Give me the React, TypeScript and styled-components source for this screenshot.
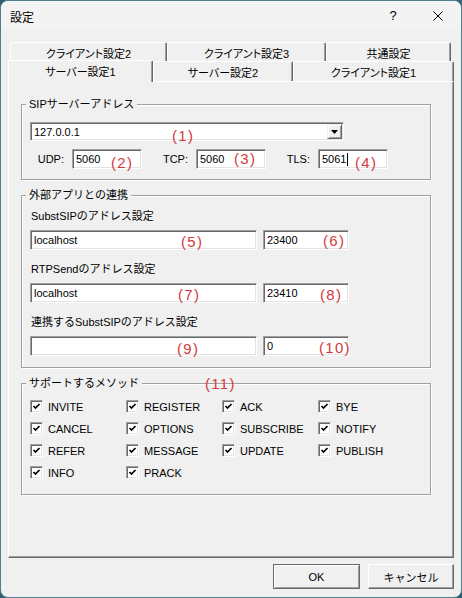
import React from "react";
import styled, { createGlobalStyle, css } from "styled-components";

const GlobalStyle = createGlobalStyle`
  html, body { margin: 0; padding: 0; }
  body {
    background: #2f6170;
    font-family: "Liberation Sans", "Noto Sans CJK JP", sans-serif;
    font-size: 11px;
    color: #000;
  }
  * { box-sizing: border-box; }
`;

const sunken = css`
  border-style: solid;
  border-width: 1px;
  border-color: #a0a0a0 #ffffff #ffffff #a0a0a0;
  box-shadow: inset 1px 1px 0 #696969, inset -1px -1px 0 #e3e3e3;
  background: #ffffff;
`;

const Window = styled.div`
  width: 462px;
  height: 598px;
  border: 1px solid #4f7f8b;
  border-radius: 8px;
  background: #f0f0f0;
  overflow: hidden;
  display: flex;
  flex-direction: column;
`;

const TitleBar = styled.div`
  height: 29px;
  flex: none;
  display: flex;
  align-items: center;
  padding-left: 9px;
  background: #f3f3f3;
`;

const Title = styled.div`
  flex: 1;
  font-family: "Noto Sans CJK JP", sans-serif;
  font-size: 12px;
  padding-top: 1px;
`;

const CaptionButton = styled.div<{ $w: number }>`
  width: ${(p) => p.$w}px;
  height: 29px;
  display: flex;
  align-items: center;
  justify-content: center;
  font-size: 13px;
`;

const Body = styled.div`
  flex: 1;
  display: flex;
  flex-direction: column;
  padding: 12px 7px 8px;
  min-height: 0;
`;

const TabRow = styled.div<{ $back?: boolean }>`
  display: flex;
  align-items: flex-end;
  height: ${(p) => (p.$back ? 20 : 19)}px;
  padding-left: ${(p) => (p.$back ? 2 : 0)}px;
  flex: none;
`;

const Tab = styled.div<{ $w: number; $active?: boolean }>`
  flex: none;
  width: ${(p) => p.$w}px;
  height: ${(p) => (p.$active ? 22 : 20)}px;
  margin-bottom: ${(p) => (p.$active ? -1 : 0)}px;
  ${(p) => (p.$active ? "position: relative; z-index: 1;" : "")}
  display: flex;
  align-items: center;
  justify-content: center;
  background: #f0f0f0;
  border-top: 1px solid #ffffff;
  border-left: 1px solid #ffffff;
  border-right: 1px solid #696969;
  border-radius: 2px 2px 0 0;
  box-shadow: inset -1px 0 0 #a0a0a0;
  font-feature-settings: "palt";
  font-size: 11px;
  padding-bottom: ${(p) => (p.$active ? 2 : 0)}px;
  white-space: nowrap;
`;

const Panel = styled.div`
  flex: 1;
  border-top: 1px solid #ffffff;
  border-left: 1px solid #ffffff;
  border-right: 1px solid #696969;
  border-bottom: 1px solid #696969;
  box-shadow: inset -1px -1px 0 #a0a0a0;
  padding: 15px 0 0 12px;
  display: flex;
  flex-direction: column;
  gap: 8px;
`;

const Group = styled.fieldset<{ $pt: number; $pb: number }>`
  margin: 0;
  width: 410px;
  min-width: 0;
  position: relative;
  border: 1px solid #a0a0a0;
  box-shadow: inset 1px 1px 0 #ffffff, 1px 1px 0 #ffffff;
  padding: ${(p) => p.$pt}px 8px ${(p) => p.$pb}px 8px;
`;

const Legend = styled.legend`
  padding: 0 3px;
  margin-left: -4px;
  line-height: 14px;
  font-size: 11px;
  background: #f0f0f0;
`;

const GroupBody = styled.div<{ $gap: number }>`
  display: flex;
  flex-direction: column;
  gap: ${(p) => p.$gap}px;
`;

const Combo = styled.div`
  ${sunken};
  position: relative;
  width: 314px;
  height: 19px;
  padding: 1px;
  display: flex;
  align-items: center;
`;

const ComboText = styled.div`
  flex: 1;
  padding-left: 2px;
`;

const DropButton = styled.div`
  width: 15px;
  height: 15px;
  display: flex;
  align-items: center;
  justify-content: center;
  background: #f0f0f0;
  border-style: solid;
  border-width: 1px;
  border-color: #f0f0f0 #696969 #696969 #f0f0f0;
  box-shadow: inset 1px 1px 0 #ffffff, inset -1px -1px 0 #a0a0a0;
`;

const PortRow = styled.div`
  display: grid;
  grid-template-columns: 34px 70px 38px 70px 36px 70px;
  column-gap: 8px;
  align-items: center;
`;

const PortLabel = styled.div`
  text-align: right;
  white-space: nowrap;
`;

const TextBox = styled.div<{ $w: number }>`
  ${sunken};
  position: relative;
  width: ${(p) => p.$w}px;
  height: 20px;
  padding: 0 2px 0 3px;
  display: flex;
  align-items: center;
  white-space: nowrap;
`;

const Caret = styled.span`
  display: inline-block;
  width: 1px;
  height: 13px;
  background: #000;
  margin-left: 1px;
`;

const Note = styled.span<{ $x: number; $cy: number }>`
  position: absolute;
  left: ${(p) => p.$x}px;
  top: ${(p) => p.$cy - 9}px;
  color: #d33b3b;
  font-family: "Liberation Sans", sans-serif;
  font-size: 15px;
  line-height: 15px;
  letter-spacing: 1.3px;
  white-space: nowrap;
  pointer-events: none;
`;

const Block = styled.div`
  display: flex;
  flex-direction: column;
  gap: 7px;
`;

const FieldLabel = styled.div`
  line-height: 14px;
  padding-left: 1px;
`;

const AddrRow = styled.div`
  display: flex;
  gap: 6px;
`;

const MethodGrid = styled.div`
  display: grid;
  grid-template-columns: repeat(4, 96px);
  grid-auto-rows: 13px;
  row-gap: 9px;
`;

const Method = styled.label`
  display: flex;
  align-items: center;
  gap: 5px;
  white-space: nowrap;
`;

const CheckBox = styled.span`
  ${sunken};
  width: 13px;
  height: 13px;
  flex: none;
  display: flex;
  align-items: center;
  justify-content: center;
`;

const ButtonRow = styled.div`
  display: flex;
  justify-content: flex-end;
  gap: 8px;
  padding-top: 6px;
  flex: none;
`;

const Button = styled.div<{ $w: number; $default?: boolean }>`
  width: ${(p) => p.$w}px;
  height: 25px;
  display: flex;
  align-items: center;
  justify-content: center;
  background: #f0f0f0;
  border: 1px solid;
  border-color: ${(p) =>
    p.$default ? "#696969" : "#ffffff #696969 #696969 #ffffff"};
  box-shadow: ${(p) =>
    p.$default
      ? "inset 1px 1px 0 #ffffff, inset -1px -1px 0 #a0a0a0"
      : "inset -1px -1px 0 #a0a0a0"};
  font-size: 11px;
`;

const Check = () => (
  <svg width="9" height="9" viewBox="0 0 9 9">
    <polyline
      points="1.5,4 3.5,6 7.5,2"
      fill="none"
      stroke="#000"
      strokeWidth="1.7"
    />
  </svg>
);

const methods = [
  "INVITE", "REGISTER", "ACK", "BYE",
  "CANCEL", "OPTIONS", "SUBSCRIBE", "NOTIFY",
  "REFER", "MESSAGE", "UPDATE", "PUBLISH",
  "INFO", "PRACK",
];

export default function App() {
  return (
    <>
      <GlobalStyle />
      <Window>
        <TitleBar>
          <Title>設定</Title>
          <CaptionButton $w={44}>?</CaptionButton>
          <CaptionButton $w={46}>
            <svg width="10" height="10" viewBox="0 0 10 10">
              <path d="M0.5 0.5L9.5 9.5M9.5 0.5L0.5 9.5" stroke="#000" strokeWidth="1" />
            </svg>
          </CaptionButton>
        </TitleBar>
        <Body>
          <TabRow $back>
            <Tab $w={157}>クライアント設定2</Tab>
            <Tab $w={159}>クライアント設定3</Tab>
            <Tab $w={125}>共通設定</Tab>
          </TabRow>
          <TabRow>
            <Tab $w={145} $active>サーバー設定1</Tab>
            <Tab $w={140}>サーバー設定2</Tab>
            <Tab $w={161}>クライアント設定1</Tab>
          </TabRow>
          <Panel>
            <Group $pt={11} $pb={10}>
              <Legend>SIPサーバーアドレス</Legend>
              <GroupBody $gap={8}>
                <Combo>
                  <ComboText>127.0.0.1</ComboText>
                  <DropButton>
                    <svg width="7" height="4" viewBox="0 0 7 4">
                      <path d="M0 0H7L3.5 4Z" fill="#000" />
                    </svg>
                  </DropButton>
                  <Note $x={141} $cy={14}>(1)</Note>
                </Combo>
                <PortRow>
                  <PortLabel>UDP:</PortLabel>
                  <TextBox $w={70}>
                    5060<Note $x={38} $cy={14}>(2)</Note>
                  </TextBox>
                  <PortLabel>TCP:</PortLabel>
                  <TextBox $w={70}>
                    5060<Note $x={37} $cy={10}>(3)</Note>
                  </TextBox>
                  <PortLabel>TLS:</PortLabel>
                  <TextBox $w={70}>
                    5061<Caret />
                    <Note $x={36} $cy={14}>(4)</Note>
                  </TextBox>
                </PortRow>
              </GroupBody>
            </Group>

            <Group $pt={7} $pb={11}>
              <Legend>外部アプリとの連携</Legend>
              <GroupBody $gap={12}>
                <Block>
                  <FieldLabel>SubstSIPのアドレス設定</FieldLabel>
                  <AddrRow>
                    <TextBox $w={227}>
                      localhost<Note $x={150} $cy={12}>(5)</Note>
                    </TextBox>
                    <TextBox $w={86}>
                      23400<Note $x={59} $cy={11}>(6)</Note>
                    </TextBox>
                  </AddrRow>
                </Block>
                <Block>
                  <FieldLabel>RTPSendのアドレス設定</FieldLabel>
                  <AddrRow>
                    <TextBox $w={227}>
                      localhost<Note $x={147} $cy={12}>(7)</Note>
                    </TextBox>
                    <TextBox $w={86}>
                      23410<Note $x={56} $cy={12}>(8)</Note>
                    </TextBox>
                  </AddrRow>
                </Block>
                <Block>
                  <FieldLabel>連携するSubstSIPのアドレス設定</FieldLabel>
                  <AddrRow>
                    <TextBox $w={227}>
                      <Note $x={146} $cy={13}>(9)</Note>
                    </TextBox>
                    <TextBox $w={86}>
                      0<Note $x={55} $cy={12}>(10)</Note>
                    </TextBox>
                  </AddrRow>
                </Block>
              </GroupBody>
            </Group>

            <Group $pt={10} $pb={15}>
              <Legend>サポートするメソッド</Legend>
              <Note $x={183} $cy={-5}>(11)</Note>
              <MethodGrid>
                {methods.map((m) => (
                  <Method key={m}>
                    <CheckBox>
                      <Check />
                    </CheckBox>
                    {m}
                  </Method>
                ))}
              </MethodGrid>
            </Group>
          </Panel>
          <ButtonRow>
            <Button $w={87} $default>OK</Button>
            <Button $w={86}>キャンセル</Button>
          </ButtonRow>
        </Body>
      </Window>
    </>
  );
}
